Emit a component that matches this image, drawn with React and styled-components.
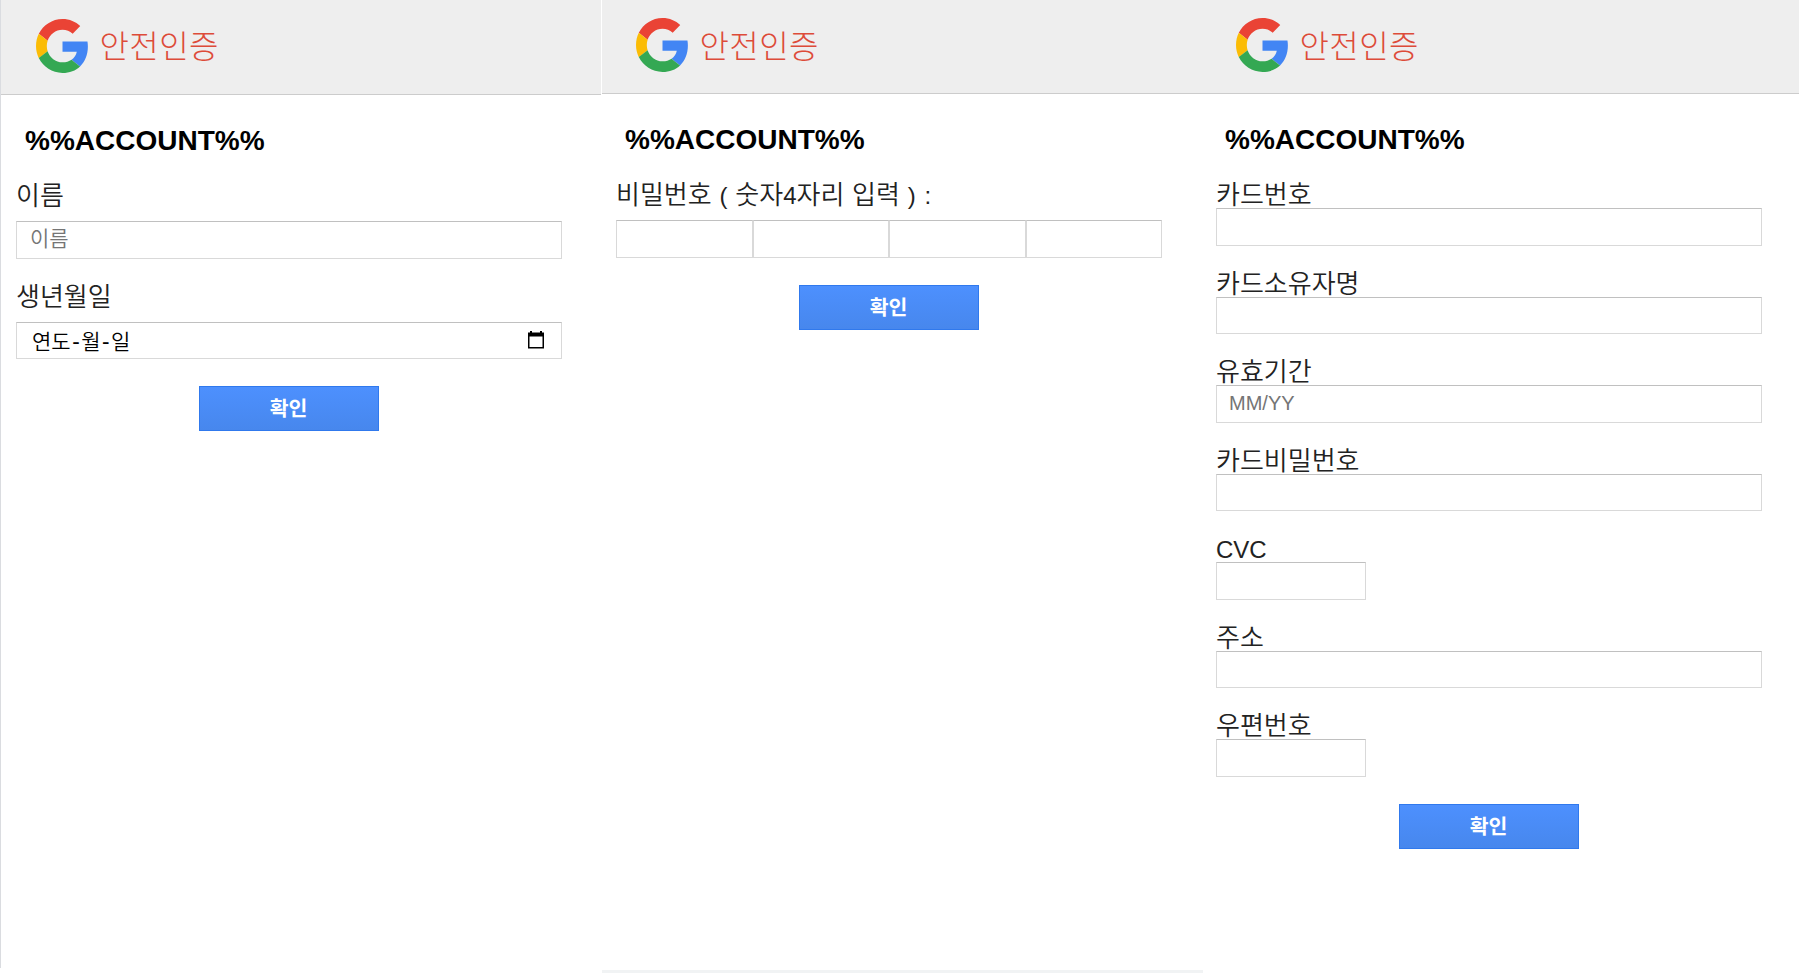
import React from "react";
import styled, { createGlobalStyle } from "styled-components";

const GlobalStyle = createGlobalStyle`
  * { box-sizing: border-box; }
  body {
    margin: 0;
    background: #fff;
    color: #222;
    font-family: "Liberation Sans", "Noto Sans CJK KR", sans-serif;
    overflow: hidden;
  }
`;

const Board = styled.main`
  display: grid;
  grid-template-columns: 601px 602px 596px;
  height: 976px;
`;

const Screen = styled.section`
  height: ${(p) => p.$height || 976}px;
  border-left: ${(p) => (p.$edge ? "1px solid #dadce0" : "0")};
  border-bottom: ${(p) => (p.$foot ? "3px solid #f1f3f4" : "0")};
  margin-left: ${(p) => p.$gap || 0}px;
`;

const Header = styled.header`
  display: flex;
  align-items: center;
  gap: 11px;
  height: ${(p) => p.$height}px;
  padding-left: ${(p) => p.$inset}px;
  padding-bottom: 3px;
  background: #eee;
  border-bottom: 1px solid #ccc;
`;

const Title = styled.h1`
  margin: 0;
  padding-bottom: 3px;
  font: 300 32px/40px "Noto Sans CJK KR", sans-serif;
  letter-spacing: 0.4px;
  color: #dd4b39;
`;

const Body = styled.div`
  width: 546px;
  margin-left: ${(p) => p.$inset}px;
  padding-top: 29px;
`;

const Account = styled.h2`
  margin: 0 0 21px;
  padding-left: 9px;
  font: bold 28px/34px "Liberation Sans", sans-serif;
  color: #000;
`;

const Field = styled.div`
  margin-bottom: 21px;
`;

const Label = styled.div`
  height: 30px;
  margin-bottom: ${(p) => p.$gap || 0}px;
  font: 350 26px/30px "Noto Sans CJK KR", sans-serif;
  word-spacing: 2px;
  white-space: pre;
`;

const Latin = styled.span`
  font: 24px/30px "Liberation Sans", sans-serif;
`;

const Box = styled.div`
  display: flex;
  align-items: center;
  justify-content: space-between;
  width: ${(p) => p.$width || "100%"};
  height: 37.5px;
  padding: 0 17px 0 12px;
  background: #fff;
  border: 1px solid #d9d9d9;
  border-top-color: #c0c0c0;
`;

const Hint = styled.span`
  padding: 0 0 6px 1px;
  font: 350 21px/30px "Noto Sans CJK KR", sans-serif;
  color: #757575;
`;

const LatinHint = styled(Hint)`
  padding: 0 0 1px;
  font: 20px/30px "Liberation Sans", sans-serif;
`;

const DateHint = styled(Hint)`
  padding: 0 0 1px 3px;
  color: #000;
`;

const Dash = styled.span`
  margin: 0 1.5px;
  font-weight: 500;
`;

const Digits = styled.div`
  display: grid;
  grid-template-columns: repeat(4, 1fr);
`;

const Confirm = styled.div`
  width: 180px;
  height: 45px;
  margin: 27px 0 0 183px;
  padding-right: 1px;
  border: 1px solid #3079ed;
  background: linear-gradient(#4d90fe, #4787ed);
  color: #fff;
  font: bold 20.5px/40px "Noto Sans CJK KR", sans-serif;
  text-align: center;
`;

const Logo = () => (
  <svg width="53" height="54" viewBox="0 0 48 48" preserveAspectRatio="none">
    <path fill="#EA4335" d="M24 9.5c3.54 0 6.71 1.22 9.21 3.6l6.85-6.85C35.9 2.38 30.47 0 24 0 14.62 0 6.51 5.38 2.56 13.22l7.98 6.19C12.43 13.72 17.74 9.5 24 9.5z" />
    <path fill="#4285F4" d="M46.98 24.55c0-1.57-.15-3.09-.38-4.55H24v9.02h12.94c-.58 2.96-2.26 5.48-4.78 7.18l7.73 6c4.51-4.18 7.09-10.36 7.09-17.65z" />
    <path fill="#FBBC05" d="M10.53 28.59c-.48-1.45-.76-2.99-.76-4.59s.27-3.14.76-4.59l-7.98-6.19C.92 16.46 0 20.12 0 24c0 3.88.92 7.54 2.56 10.78l7.97-6.19z" />
    <path fill="#34A853" d="M24 48c6.48 0 11.93-2.13 15.89-5.81l-7.73-6c-2.15 1.45-4.92 2.3-8.16 2.3-6.26 0-11.57-4.22-13.47-9.91l-7.98 6.19C6.51 42.62 14.62 48 24 48z" />
  </svg>
);

const CalendarIcon = () => (
  <svg width="16" height="18" viewBox="0 0 16 18">
    <path fill="#000" fillRule="evenodd" d="M0 1.5h2V0h2v1.5h8V0h2v1.5h2v16H0zM1.5 5.5V16h13V5.5z" />
  </svg>
);

const Brand = ({ height, inset }) => (
  <Header $height={height} $inset={inset}>
    <Logo />
    <Title>안전인증</Title>
  </Header>
);

const CARD_FIELDS = [
  { label: "카드번호" },
  { label: "카드소유자명" },
  { label: "유효기간", hint: "MM/YY" },
  { label: "카드비밀번호" },
  { label: "CVC", latin: true, width: "150px" },
  { label: "주소" },
  { label: "우편번호", width: "150px" },
];

export default function App() {
  return (
    <>
      <GlobalStyle />
      <Board>
        <Screen $edge $height={968}>
          <Brand height={95} inset={34.5} />
          <Body $inset={15}>
            <Account>%%ACCOUNT%%</Account>
            <Field>
              <Label $gap={12}>이름</Label>
              <Box><Hint>이름</Hint></Box>
            </Field>
            <Field>
              <Label $gap={12}>생년월일</Label>
              <Box>
                <DateHint>연도<Dash>-</Dash>월<Dash>-</Dash>일</DateHint>
                <CalendarIcon />
              </Box>
            </Field>
            <Confirm>확인</Confirm>
          </Body>
        </Screen>

        <Screen $foot $gap={1} $height={973}>
          <Brand height={94} inset={33.5} />
          <Body $inset={14}>
            <Account>%%ACCOUNT%%</Account>
            <Field>
              <Label $gap={12}>비밀번호 <Latin>(</Latin> 숫자<Latin>4</Latin>자리 입력 <Latin>) :</Latin></Label>
              <Digits>
                <Box /><Box /><Box /><Box />
              </Digits>
            </Field>
            <Confirm>확인</Confirm>
          </Body>
        </Screen>

        <Screen>
          <Brand height={94} inset={32.5} />
          <Body $inset={13}>
            <Account>%%ACCOUNT%%</Account>
            {CARD_FIELDS.map((f) => (
              <Field key={f.label}>
                <Label>{f.latin ? <Latin>{f.label}</Latin> : f.label}</Label>
                <Box $width={f.width}>{f.hint && <LatinHint>{f.hint}</LatinHint>}</Box>
              </Field>
            ))}
            <Confirm>확인</Confirm>
          </Body>
        </Screen>
      </Board>
    </>
  );
}
